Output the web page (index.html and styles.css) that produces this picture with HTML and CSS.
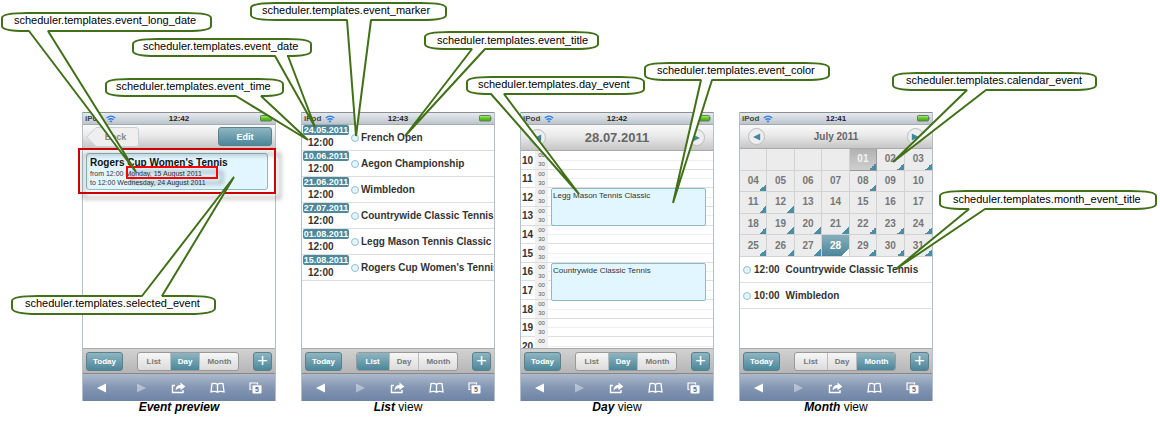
FILE: index.html
```html
<!DOCTYPE html>
<html lang="en">
<head>
<meta charset="utf-8">
<title>Mobile scheduler templates</title>
<link rel="stylesheet" href="styles.css">
</head>
<body>
<svg class="defs" aria-hidden="true">
  <defs>
    <linearGradient id="batt" x1="0" y1="0" x2="0" y2="1"><stop offset="0" stop-color="#b5ef8c"/><stop offset=".5" stop-color="#5cc820"/><stop offset="1" stop-color="#3fa80e"/></linearGradient>
    <symbol id="wifi" viewBox="0 0 10 8"><path d="M.8 3Q5-.7 9.200 3M2.500 4.800Q5 2.600 7.500 4.800" fill="none" stroke="#2c7be8" stroke-width="1.300"/><path d="M5 7.700L3.500 6Q5 5 6.500 6Z" fill="#2c7be8"/></symbol>
    <symbol id="battery" viewBox="0 0 13 7"><rect x=".5" y=".5" width="11" height="5.500" rx=".8" fill="url(#batt)" stroke="#6b7a60"/><path d="M12 2.200v2.400" stroke="#6b7a60"/></symbol>
    <symbol id="prev" viewBox="0 0 10 10"><path d="M9 .5V9.500L0 5Z" fill="currentColor"/></symbol>
    <symbol id="next" viewBox="0 0 10 10"><path d="M1 .5V9.500L10 5Z" fill="currentColor"/></symbol>
    <symbol id="share" viewBox="0 0 14 12"><path d="M3.500 3.500H1V10.500H11.500V8" fill="none" stroke="#fff" stroke-width="1.400"/><path d="M4 8.500Q4.200 3 9 3V.5L13.800 4.500 9 8.200V6Q6 5.800 4 8.500Z" fill="#fff"/></symbol>
    <symbol id="book" viewBox="0 0 15 11"><path d="M7.500 2Q5.500.2 2 1.200L1 9.300Q5.500 8.300 7.500 9.800Q9.500 8.300 14 9.300L13 1.200Q9.500.2 7.500 2V9.500" fill="none" stroke="#fff" stroke-width="1.300"/></symbol>
    <symbol id="pages" viewBox="0 0 13 12"><path d="M2.500 7.500H1V1H8.500V2.500" fill="none" stroke="#fff" stroke-width="1.200"/><rect x="3.500" y="3.300" width="9" height="8.200" rx="1" fill="#fff"/><text class="pages-count" x="8" y="10">5</text></symbol>
  </defs>
</svg>

<main class="board">
  <figure class="view">
    <div class="phone">
      <div class="status"><span class="carrier">iPod<svg class="wifi"><use href="#wifi"/></svg></span><b>12:42</b><svg class="battery"><use href="#battery"/></svg></div>
      <div class="header header-preview">
        <button class="back"><svg class="back-shape" viewBox="0 0 53 20" preserveAspectRatio="none"><path d="M10 .5H50Q52.500.5 52.500 3V17Q52.500 19.500 50 19.500H10L.7 10Z"/></svg><span>Back</span></button>
        <button class="btn edit">Edit</button>
      </div>
      <div class="body preview-body">
        <article class="selected">
          <h2 class="selected-title">Rogers Cup Women's Tennis</h2>
          <p class="selected-line">from 12:00 Monday, 15 August 2011</p>
          <p class="selected-line">to 12:00 Wednesday, 24 August 2011</p>
        </article>
      </div>
      <div class="toolbar"><button class="btn">Today</button><div class="tabs"><button class="tab">List</button><button class="tab tab-on">Day</button><button class="tab">Month</button></div><button class="btn add" aria-label="Add">+</button></div>
      <nav class="browser"><button class="nav" aria-label="Back"><svg class="ic-s"><use href="#prev"/></svg></button><button class="nav dim" aria-label="Forward"><svg class="ic-s"><use href="#next"/></svg></button><button class="nav" aria-label="Share"><svg class="ic-m"><use href="#share"/></svg></button><button class="nav" aria-label="Bookmarks"><svg class="ic-m"><use href="#book"/></svg></button><button class="nav" aria-label="Pages"><svg class="ic-m"><use href="#pages"/></svg></button></nav>
    </div>
    <figcaption class="caption"><em>Event preview</em></figcaption>
    <svg class="notes" viewBox="82 112 194 289">
      <g class="frames"><rect class="frame-dark" x="79" y="149" width="196" height="44"/><rect class="frame-red" x="127" y="167" width="90" height="11"/></g>
      <path class="note" d="M2 18Q2 13 28 13H186Q211 13 211 18V26Q211 31 186 31H48L136 172L29 31H26Q2 31 2 26Z"/>
      <text class="note-text" x="14" y="24">scheduler.templates.event_long_date</text>
      <path class="note" d="M12 301Q12 296 38 296H142L234 177L162 296H189Q215 296 215 301V308Q215 314 189 314H38Q12 314 12 308Z"/>
      <text class="note-text" x="25" y="307">scheduler.templates.selected_event</text>
    </svg>
  </figure>

  <figure class="view">
    <div class="phone">
      <div class="status"><span class="carrier">iPod<svg class="wifi"><use href="#wifi"/></svg></span><b>12:43</b><svg class="battery"><use href="#battery"/></svg></div>
      <ul class="body events">
        <li class="event"><div class="when"><span class="date">24.05.2011</span><span class="time">12:00</span></div><i class="dot"></i><span class="name">French Open</span></li>
        <li class="event"><div class="when"><span class="date">10.06.2011</span><span class="time">12:00</span></div><i class="dot"></i><span class="name">Aegon Championship</span></li>
        <li class="event"><div class="when"><span class="date">21.06.2011</span><span class="time">12:00</span></div><i class="dot"></i><span class="name">Wimbledon</span></li>
        <li class="event"><div class="when"><span class="date">27.07.2011</span><span class="time">12:00</span></div><i class="dot"></i><span class="name">Countrywide Classic Tennis</span></li>
        <li class="event"><div class="when"><span class="date">01.08.2011</span><span class="time">12:00</span></div><i class="dot"></i><span class="name">Legg Mason Tennis Classic</span></li>
        <li class="event"><div class="when"><span class="date">15.08.2011</span><span class="time">12:00</span></div><i class="dot"></i><span class="name">Rogers Cup Women's Tennis</span></li>
      </ul>
      <div class="toolbar"><button class="btn">Today</button><div class="tabs"><button class="tab tab-on">List</button><button class="tab">Day</button><button class="tab">Month</button></div><button class="btn add" aria-label="Add">+</button></div>
      <nav class="browser"><button class="nav" aria-label="Back"><svg class="ic-s"><use href="#prev"/></svg></button><button class="nav dim" aria-label="Forward"><svg class="ic-s"><use href="#next"/></svg></button><button class="nav" aria-label="Share"><svg class="ic-m"><use href="#share"/></svg></button><button class="nav" aria-label="Bookmarks"><svg class="ic-m"><use href="#book"/></svg></button><button class="nav" aria-label="Pages"><svg class="ic-m"><use href="#pages"/></svg></button></nav>
    </div>
    <figcaption class="caption"><em>List</em> view</figcaption>
    <svg class="notes" viewBox="301 112 194 289">
      <path class="note" d="M251 8Q251 3 276 3H421Q446 3 446 8V15Q446 20 421 20H371L356 136L347 20H276Q251 20 251 15Z"/>
      <text class="note-text" x="262" y="14">scheduler.templates.event_marker</text>
      <path class="note" d="M133 44Q133 39 157 39H287Q311 39 311 44V51Q311 56 287 56H288L315 127L275 56H157Q133 56 133 51Z"/>
      <text class="note-text" x="143" y="50">scheduler.templates.event_date</text>
      <path class="note" d="M106 84Q106 79 130 79H259Q283 79 283 84V91Q283 96 261 96L308 140L236 96H130Q106 96 106 91Z"/>
      <text class="note-text" x="116" y="90">scheduler.templates.event_time</text>
      <path class="note" d="M425 37Q425 32 449 32H574Q598 32 598 37V44Q598 49 574 49H485L405 136L472 49H449Q425 49 425 44Z"/>
      <text class="note-text" x="437" y="44">scheduler.templates.event_title</text>
    </svg>
  </figure>

  <figure class="view">
    <div class="phone">
      <div class="status"><span class="carrier">iPod<svg class="wifi"><use href="#wifi"/></svg></span><b>12:42</b><svg class="battery"><use href="#battery"/></svg></div>
      <div class="header header-day"><button class="round" aria-label="Previous day"><svg class="arrow"><use href="#prev"/></svg></button><span>28.07.2011</span><button class="round" aria-label="Next day"><svg class="arrow"><use href="#next"/></svg></button></div>
      <div class="body day-body">
        <div class="hours">
          <div class="hour"><b>10</b><span class="mins"><span>00</span><span>30</span></span><i class="slot"></i></div>
          <div class="hour"><b>11</b><span class="mins"><span>00</span><span>30</span></span><i class="slot"></i></div>
          <div class="hour"><b>12</b><span class="mins"><span>00</span><span>30</span></span><i class="slot"></i></div>
          <div class="hour"><b>13</b><span class="mins"><span>00</span><span>30</span></span><i class="slot"></i></div>
          <div class="hour"><b>14</b><span class="mins"><span>00</span><span>30</span></span><i class="slot"></i></div>
          <div class="hour"><b>15</b><span class="mins"><span>00</span><span>30</span></span><i class="slot"></i></div>
          <div class="hour"><b>16</b><span class="mins"><span>00</span><span>30</span></span><i class="slot"></i></div>
          <div class="hour"><b>17</b><span class="mins"><span>00</span><span>30</span></span><i class="slot"></i></div>
          <div class="hour"><b>18</b><span class="mins"><span>00</span><span>30</span></span><i class="slot"></i></div>
          <div class="hour"><b>19</b><span class="mins"><span>00</span><span>30</span></span><i class="slot"></i></div>
          <div class="hour"><b>20</b><span class="mins"><span>00</span></span><i class="slot"></i></div>
        </div>
        <div class="block block-noon">Legg Mason Tennis Classic</div>
        <div class="block block-late">Countrywide Classic Tennis</div>
      </div>
      <div class="toolbar"><button class="btn">Today</button><div class="tabs"><button class="tab">List</button><button class="tab tab-on">Day</button><button class="tab">Month</button></div><button class="btn add" aria-label="Add">+</button></div>
      <nav class="browser"><button class="nav" aria-label="Back"><svg class="ic-s"><use href="#prev"/></svg></button><button class="nav dim" aria-label="Forward"><svg class="ic-s"><use href="#next"/></svg></button><button class="nav" aria-label="Share"><svg class="ic-m"><use href="#share"/></svg></button><button class="nav" aria-label="Bookmarks"><svg class="ic-m"><use href="#book"/></svg></button><button class="nav" aria-label="Pages"><svg class="ic-m"><use href="#pages"/></svg></button></nav>
    </div>
    <figcaption class="caption"><em>Day</em> view</figcaption>
    <svg class="notes" viewBox="520 112 194 289">
      <path class="note" d="M467 82Q467 77 491 77H620Q644 77 644 82V89Q644 94 620 94H504L579 194L491 94Q467 94 467 89Z"/>
      <text class="note-text" x="478" y="88">scheduler.templates.day_event</text>
      <path class="note" d="M645 68Q645 63 669 63H805Q829 63 829 68V75Q829 80 805 80H712L673 203L701 80H669Q645 80 645 75Z"/>
      <text class="note-text" x="657" y="74">scheduler.templates.event_color</text>
    </svg>
  </figure>

  <figure class="view">
    <div class="phone">
      <div class="status"><span class="carrier">iPod<svg class="wifi"><use href="#wifi"/></svg></span><b>12:41</b><svg class="battery"><use href="#battery"/></svg></div>
      <div class="header header-month"><button class="round" aria-label="Previous month"><svg class="arrow"><use href="#prev"/></svg></button><span>July 2011</span><button class="round" aria-label="Next month"><svg class="arrow"><use href="#next"/></svg></button></div>
      <div class="body">
        <table class="calendar">
          <tr><td></td><td></td><td></td><td></td><td class="now has">01</td><td class="has">02</td><td class="has">03</td></tr>
          <tr><td class="has">04</td><td>05</td><td>06</td><td>07</td><td class="has">08</td><td>09</td><td>10</td></tr>
          <tr><td class="has">11</td><td class="has">12</td><td>13</td><td>14</td><td>15</td><td>16</td><td>17</td></tr>
          <tr><td class="has">18</td><td class="has">19</td><td class="has">20</td><td class="has">21</td><td class="has">22</td><td class="has">23</td><td class="has">24</td></tr>
          <tr><td class="has">25</td><td class="has">26</td><td class="has">27</td><td class="picked has">28</td><td class="has">29</td><td class="has">30</td><td class="has">31</td></tr>
        </table>
        <ul class="agenda">
          <li class="event agenda-item"><i class="dot"></i><span class="agenda-time">12:00</span><span class="name">Countrywide Classic Tennis</span></li>
          <li class="event agenda-item"><i class="dot"></i><span class="agenda-time">10:00</span><span class="name">Wimbledon</span></li>
        </ul>
      </div>
      <div class="toolbar"><button class="btn">Today</button><div class="tabs"><button class="tab">List</button><button class="tab">Day</button><button class="tab tab-on">Month</button></div><button class="btn add" aria-label="Add">+</button></div>
      <nav class="browser"><button class="nav" aria-label="Back"><svg class="ic-s"><use href="#prev"/></svg></button><button class="nav dim" aria-label="Forward"><svg class="ic-s"><use href="#next"/></svg></button><button class="nav" aria-label="Share"><svg class="ic-m"><use href="#share"/></svg></button><button class="nav" aria-label="Bookmarks"><svg class="ic-m"><use href="#book"/></svg></button><button class="nav" aria-label="Pages"><svg class="ic-m"><use href="#pages"/></svg></button></nav>
    </div>
    <figcaption class="caption"><em>Month</em> view</figcaption>
    <svg class="notes" viewBox="739 112 194 289">
      <path class="note" d="M893 78Q893 73 917 73H1072Q1096 73 1096 78V85Q1096 90 1072 90H986L893 162L967 90H917Q893 90 893 85Z"/>
      <text class="note-text" x="906" y="84">scheduler.templates.calendar_event</text>
      <path class="note" d="M940 196Q940 191 966 191H1130Q1156 191 1156 196V204Q1156 209 1130 209H985L896 269L969 209H966Q940 209 940 204Z"/>
      <text class="note-text" x="953" y="203">scheduler.templates.month_event_title</text>
    </svg>
  </figure>
</main>
</body>
</html>
```

FILE: styles.css
```css
* { box-sizing: border-box; }

body {
  margin: 0;
  background: #fff;
  color: #333;
  font-family: "Liberation Sans", Arial, sans-serif;
  font-size: 10px;
}

button {
  margin: 0;
  padding: 0;
  border: 0;
  background: none;
  color: inherit;
  font: inherit;
}

svg { display: block; flex: none; }
ul { margin: 0; padding: 0; list-style: none; }

.defs { position: absolute; width: 0; height: 0; }

.board {
  display: flex;
  gap: 25px;
  padding: 112px 227px 0 82px;
}

.view {
  position: relative;
  flex: 1 1 0;
  min-width: 190px;
  margin: 0;
}

.phone {
  display: flex;
  flex-direction: column;
  min-height: 289px;
  border: 1px solid #b3bfca;
  border-width: 0 1px;
}

.caption {
  color: #000;
  font-size: 12px;
  line-height: 13px;
  text-align: center;
}
.caption em { font-weight: bold; }

/* Status bar */
.status {
  display: grid;
  grid-template-columns: 1fr auto 1fr;
  align-items: center;
  height: 13px;
  padding: 0 2px;
  border-top: 1px solid #8c9094;
  border-bottom: 1px solid #a4abb1;
  background: linear-gradient(#e6eaed, #bcc5cc);
  color: #222;
  font-size: 8px;
  line-height: 11px;
}
.carrier { display: flex; align-items: center; gap: 4px; color: #444; font-weight: bold; }
.wifi { width: 10px; height: 8px; }
.battery { width: 13px; height: 7px; justify-self: end; }

/* Headers */
.header {
  display: flex;
  align-items: center;
  justify-content: space-between;
  padding: 0 8px;
  border-bottom: 1px solid #aaa;
  background: linear-gradient(#fafafa, #e9e9e9 45%, #c6c6c6);
  color: #666;
  font-weight: bold;
}
.header-preview { height: 24px; padding: 0 3px; font-size: 9px; }
.header-day { height: 26px; font-size: 13px; }
.header-month { height: 24px; font-size: 10px; }

.back { display: grid; align-items: center; width: 53px; height: 20px; color: #888; }
.back > * { grid-area: 1 / 1; }
.back span { padding-left: 6px; }
.back-shape { width: 100%; height: 20px; fill: #efefef; stroke: #c3d3da; }

.round {
  display: grid;
  place-items: center;
  width: 17px;
  height: 17px;
  border: 1px solid #bcbcbc;
  border-radius: 50%;
  background: #eee;
  color: #3f89a0;
}
.arrow { width: 8px; height: 8px; }

.btn {
  height: 19px;
  padding: 0 6px;
  border: 1px solid #5b7f8b;
  border-radius: 3px;
  background: linear-gradient(#8fb5c1, #4b8799);
  color: #fff;
  font-size: 8px;
  font-weight: bold;
}
.btn.edit { width: 54px; font-size: 9px; }
.btn.add { width: 19px; padding: 0; font-size: 18px; font-weight: normal; line-height: 15px; }

.body { flex: 1 1 auto; overflow: hidden; background: #fff; }

/* Event preview */
.preview-body { padding: 4px 7px 0 3px; }
.selected {
  padding: 3px 3px 2px;
  border: 1px solid #8fb9c7;
  border-radius: 3px;
  background: #e2f6ff;
}
.selected-title { margin: 0 0 1px; color: #111; font-size: 10px; line-height: 11px; }
.selected-line { margin: 0; font-size: 7px; line-height: 9px; white-space: nowrap; }

/* Event list */
.event {
  display: flex;
  align-items: center;
  height: 26px;
  border-bottom: 1px solid #ddd;
  font-weight: bold;
  white-space: nowrap;
}
.when {
  display: flex;
  flex: none;
  flex-direction: column;
  align-items: flex-start;
  width: 49px;
  padding-left: 1px;
}
.date {
  width: 46px;
  border-radius: 2px;
  background: #4d889b;
  color: #fff;
  font-size: 9px;
  line-height: 10px;
  text-align: center;
}
.time { padding-left: 5px; line-height: 15px; }
.dot {
  flex: none;
  width: 8px;
  height: 8px;
  margin-right: 2px;
  border: 1px solid #94bfce;
  border-radius: 50%;
  background: #e2f6ff;
}
.agenda-item { padding-left: 3px; }
.agenda-time { padding: 0 6px 0 1px; }

/* Day view */
.day-body { position: relative; flex: 1 1 0; }
.hours { display: grid; grid-auto-rows: 1fr; height: 205px; }
.hour {
  display: grid;
  grid-template-columns: 14px 13px 1fr;
  align-items: stretch;
  min-height: 0;
  border-bottom: 1px solid #ddd;
}
.hour b { align-self: center; padding-left: 1px; line-height: 11px; }
.mins {
  display: grid;
  grid-template-rows: 1fr 1fr;
  background: #f0f0f0;
  color: #555;
  font-size: 6px;
  line-height: 9px;
  text-align: center;
}
.slot { background: linear-gradient(#eee, #eee) center / 100% 1px no-repeat; }
.block {
  position: absolute;
  left: 30px;
  right: 7px;
  height: 38px;
  padding: 2px 0 0 1px;
  border: 1px solid #8fb9c7;
  border-radius: 2px;
  background: #e2f6ff;
  font-size: 8px;
  line-height: 9px;
}
.block-noon { top: 37px; }
.block-late { top: 112px; }

/* Month view */
.calendar {
  width: 100%;
  height: 108px;
  table-layout: fixed;
  border-collapse: separate;
  border-spacing: 0;
  background: #ececec;
  color: #777;
  font-weight: bold;
  line-height: 12px;
  text-align: center;
}
.calendar td {
  padding: 0;
  border-right: 1px solid #d2d2d2;
  border-bottom: 1px solid #d2d2d2;
}
.calendar td:last-child { border-right: 0; }
.calendar .has {
  background: linear-gradient(135deg, transparent 50%, #4d8da3 50%) right bottom / 7px 7px no-repeat;
}
.calendar .now {
  border-color: #999;
  background:
    linear-gradient(135deg, transparent 50%, #4d8da3 50%) right bottom / 7px 7px no-repeat,
    linear-gradient(#b2b2b2, #cfcfcf);
  color: #f4f4f4;
}
.calendar .picked {
  background:
    linear-gradient(135deg, transparent 50%, #fff 50%) right bottom / 7px 7px no-repeat,
    linear-gradient(#86afbc, #4b8799);
  color: #fff;
}

/* Bottom bars */
.toolbar {
  display: flex;
  align-items: center;
  justify-content: space-between;
  height: 26px;
  padding: 0 3px;
  border-top: 1px solid #aaa;
  border-bottom: 1px solid #888;
  background: linear-gradient(#d2d2d2, #b5b5b5);
}
.tabs {
  display: flex;
  height: 19px;
  border: 1px solid #999;
  border-radius: 3px;
  overflow: hidden;
  background: linear-gradient(#f6f6f6, #dcdcdc);
  color: #777;
  font-size: 8px;
  font-weight: bold;
}
.tab { padding: 0 7px; }
.tab + .tab { border-left: 1px solid #bbb; }
.tab:first-child { padding: 0 9px; }
.tab-on { background: linear-gradient(#8fb5c1, #4b8799); color: #fff; }

.browser {
  display: grid;
  grid-template-columns: repeat(5, 1fr);
  height: 27px;
  background: linear-gradient(#adbacc, #8396b3 50%, #6f84a5);
  color: #fff;
}
.nav { display: grid; place-items: center; }
.dim { opacity: .4; }
.ic-s { width: 10px; height: 10px; }
.ic-m { width: 15px; height: 12px; }
.pages-count { fill: #566b8c; font-size: 7px; font-weight: bold; text-anchor: middle; }

/* Callouts */
.notes {
  position: absolute;
  z-index: 2;
  top: 0;
  left: 0;
  width: 194px;
  height: 289px;
  overflow: visible;
  pointer-events: none;
}
.note { fill: #fff; stroke: #417019; stroke-width: 2; stroke-linejoin: bevel; }
.note-text { fill: #000; font-size: 11px; }
.frames rect { fill: none; stroke-width: 2; filter: drop-shadow(5px 5px 2px rgba(0, 0, 0, .35)); }
.frames .frame-dark { stroke: #c00; }
.frames .frame-red { stroke: #f00; }
```
